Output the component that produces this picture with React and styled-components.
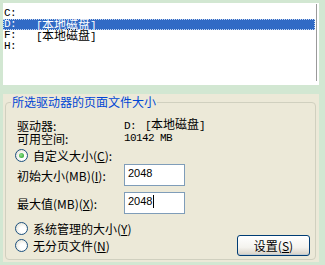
import React from 'react';
import styled, { createGlobalStyle } from 'styled-components';

const Global = createGlobalStyle`
  html, body {
    margin: 0;
    padding: 0;
    background: #d2e7d2;
  }
`;

const Frame = styled.div`
  width: 325px;
  height: 265px;
  box-sizing: border-box;
  padding: 3px 6px 0 3px;
  display: flex;
  flex-direction: column;
  gap: 9px;
  background: #d2e7d2;
  font-family: "Noto Sans CJK SC", "Liberation Sans", sans-serif;
  font-size: 12px;
  color: #000;
  overflow: hidden;
`;

const List = styled.div`
  height: 82px;
  flex-shrink: 0;
  background: #fff;
  padding-top: 5px;
  box-sizing: border-box;
  position: relative;
  border-right: 2px solid #fff;
`;

const ScrollEdge = styled.div`
  position: absolute;
  right: 0;
  top: 1px;
  bottom: 4px;
  width: 1px;
  background: #9a9a9a;
`;

const Row = styled.div`
  height: 11px;
  line-height: 11px;
  display: flex;
  align-items: center;
  padding-left: 1px;
  margin-right: 2px;
  box-sizing: border-box;
  white-space: nowrap;
  background: ${p => (p.$selected ? '#316ac5' : 'transparent')};
  color: ${p => (p.$selected ? '#fff' : '#000')};
  outline: ${p => (p.$selected ? '1px dotted #c8d8f0' : 'none')};
  outline-offset: -1px;
`;

const Mono = styled.span`
  font-family: "Liberation Mono", monospace;
  font-size: 11px;
  letter-spacing: -0.6px;
  display: inline-block;
  width: ${p => p.$w || 'auto'};
`;

const Disk = () => (
  <span>
    <Mono>[</Mono>本地磁盘<Mono>]</Mono>
  </span>
);

const Panel = styled.div`
  height: 168px;
  flex-shrink: 0;
  background: #ece9d8;
  padding: 2px 3px 2px 2px;
  box-sizing: border-box;
  display: flex;
`;

const Group = styled.fieldset`
  flex: 1;
  margin: 0;
  min-width: 0;
  border: 1px solid #d0d0bf;
  border-radius: 4px;
  padding: 8px 4px 3px 11px;
  display: flex;
  flex-direction: column;
`;

const Legend = styled.legend`
  color: #0046d5;
  padding: 0 1px;
  margin-left: -6px;
  height: 12px;
  line-height: 12px;
`;

const InfoRow = styled.div`
  display: grid;
  grid-template-columns: 107px 1fr;
  height: 15px;
  flex-shrink: 0;
  align-items: center;
  line-height: 15px;
  white-space: nowrap;
`;

const RadioRow = styled.label`
  display: flex;
  align-items: center;
  gap: 5px;
  height: ${p => p.$h || 17}px;
  flex-shrink: 0;
  margin-left: -2px;
  white-space: nowrap;
`;

const Radio = styled.span`
  width: 11px;
  height: 11px;
  border-radius: 50%;
  border: 1px solid #1c5180;
  background: radial-gradient(circle at 60% 60%, #fff 30%, #dcd9c8 100%);
  display: flex;
  align-items: center;
  justify-content: center;
  flex-shrink: 0;
  &::after {
    content: '';
    display: ${p => (p.$on ? 'block' : 'none')};
    width: 5px;
    height: 5px;
    border-radius: 50%;
    background: radial-gradient(circle at 40% 40%, #8fe08f, #1a9b1a);
  }
`;

const FieldRow = styled.div`
  display: grid;
  grid-template-columns: 107px 61px;
  align-items: center;
  height: 22px;
  flex-shrink: 0;
  margin-top: ${p => p.$top || 0}px;
  white-space: nowrap;
`;

const Input = styled.div`
  height: 22px;
  box-sizing: border-box;
  border: 1px solid #7f9db9;
  background: #fff;
  font-family: "Liberation Sans", sans-serif;
  font-size: 11px;
  line-height: 13px;
  padding: 2px 3px;
  display: flex;
  align-items: flex-start;
`;

const Caret = styled.span`
  width: 1px;
  height: 13px;
  background: #000;
  margin-left: 1px;
`;

const Bottom = styled.div`
  display: flex;
  justify-content: space-between;
  align-items: flex-start;
  flex-shrink: 0;
`;

const Radios = styled.div`
  display: flex;
  flex-direction: column;
  padding-top: 6px;
`;

const Button = styled.button`
  width: 73px;
  height: 21px;
  margin: 21px 1px 0 0;
  border: 1px solid #003c74;
  border-radius: 3px;
  background: linear-gradient(#ffffff, #f4f3ee 60%, #d6d0c5);
  box-shadow: inset 0 -1px 0 #c1ccd1, inset 0 1px 0 #fff;
  font-family: "Noto Sans CJK SC", sans-serif;
  font-size: 12px;
  color: #000;
  padding: 0;
  line-height: 18px;
`;

const U = styled.span`
  text-decoration: underline;
`;

const Key = ({ k }) => (
  <>
    (<U>{k}</U>)
  </>
);

export default function App() {
  return (
    <>
      <Global />
      <Frame>
        <List>
          <Row><Mono>C:</Mono></Row>
          <Row $selected><Mono $w="32px">D:</Mono><Disk /></Row>
          <Row><Mono $w="32px">F:</Mono><Disk /></Row>
          <Row><Mono>H:</Mono></Row>
          <ScrollEdge />
        </List>
        <Panel>
          <Group>
            <Legend>所选驱动器的页面文件大小</Legend>
            <InfoRow>
              <span>驱动器:</span>
              <span><Mono $w="21px">D:</Mono><Disk /></span>
            </InfoRow>
            <InfoRow>
              <span>可用空间:</span>
              <Mono>10142 MB</Mono>
            </InfoRow>
            <RadioRow $h={18}>
              <Radio $on />
              <span>自定义大小<Key k="C" />:</span>
            </RadioRow>
            <FieldRow>
              <span>初始大小(MB)<Key k="I" />:</span>
              <Input>2048</Input>
            </FieldRow>
            <FieldRow $top={6}>
              <span>最大值(MB)<Key k="X" />:</span>
              <Input>2048<Caret /></Input>
            </FieldRow>
            <Bottom>
              <Radios>
                <RadioRow>
                  <Radio />
                  <span>系统管理的大小<Key k="Y" /></span>
                </RadioRow>
                <RadioRow>
                  <Radio />
                  <span>无分页文件<Key k="N" /></span>
                </RadioRow>
              </Radios>
              <Button>设置<Key k="S" /></Button>
            </Bottom>
          </Group>
        </Panel>
      </Frame>
    </>
  );
}
